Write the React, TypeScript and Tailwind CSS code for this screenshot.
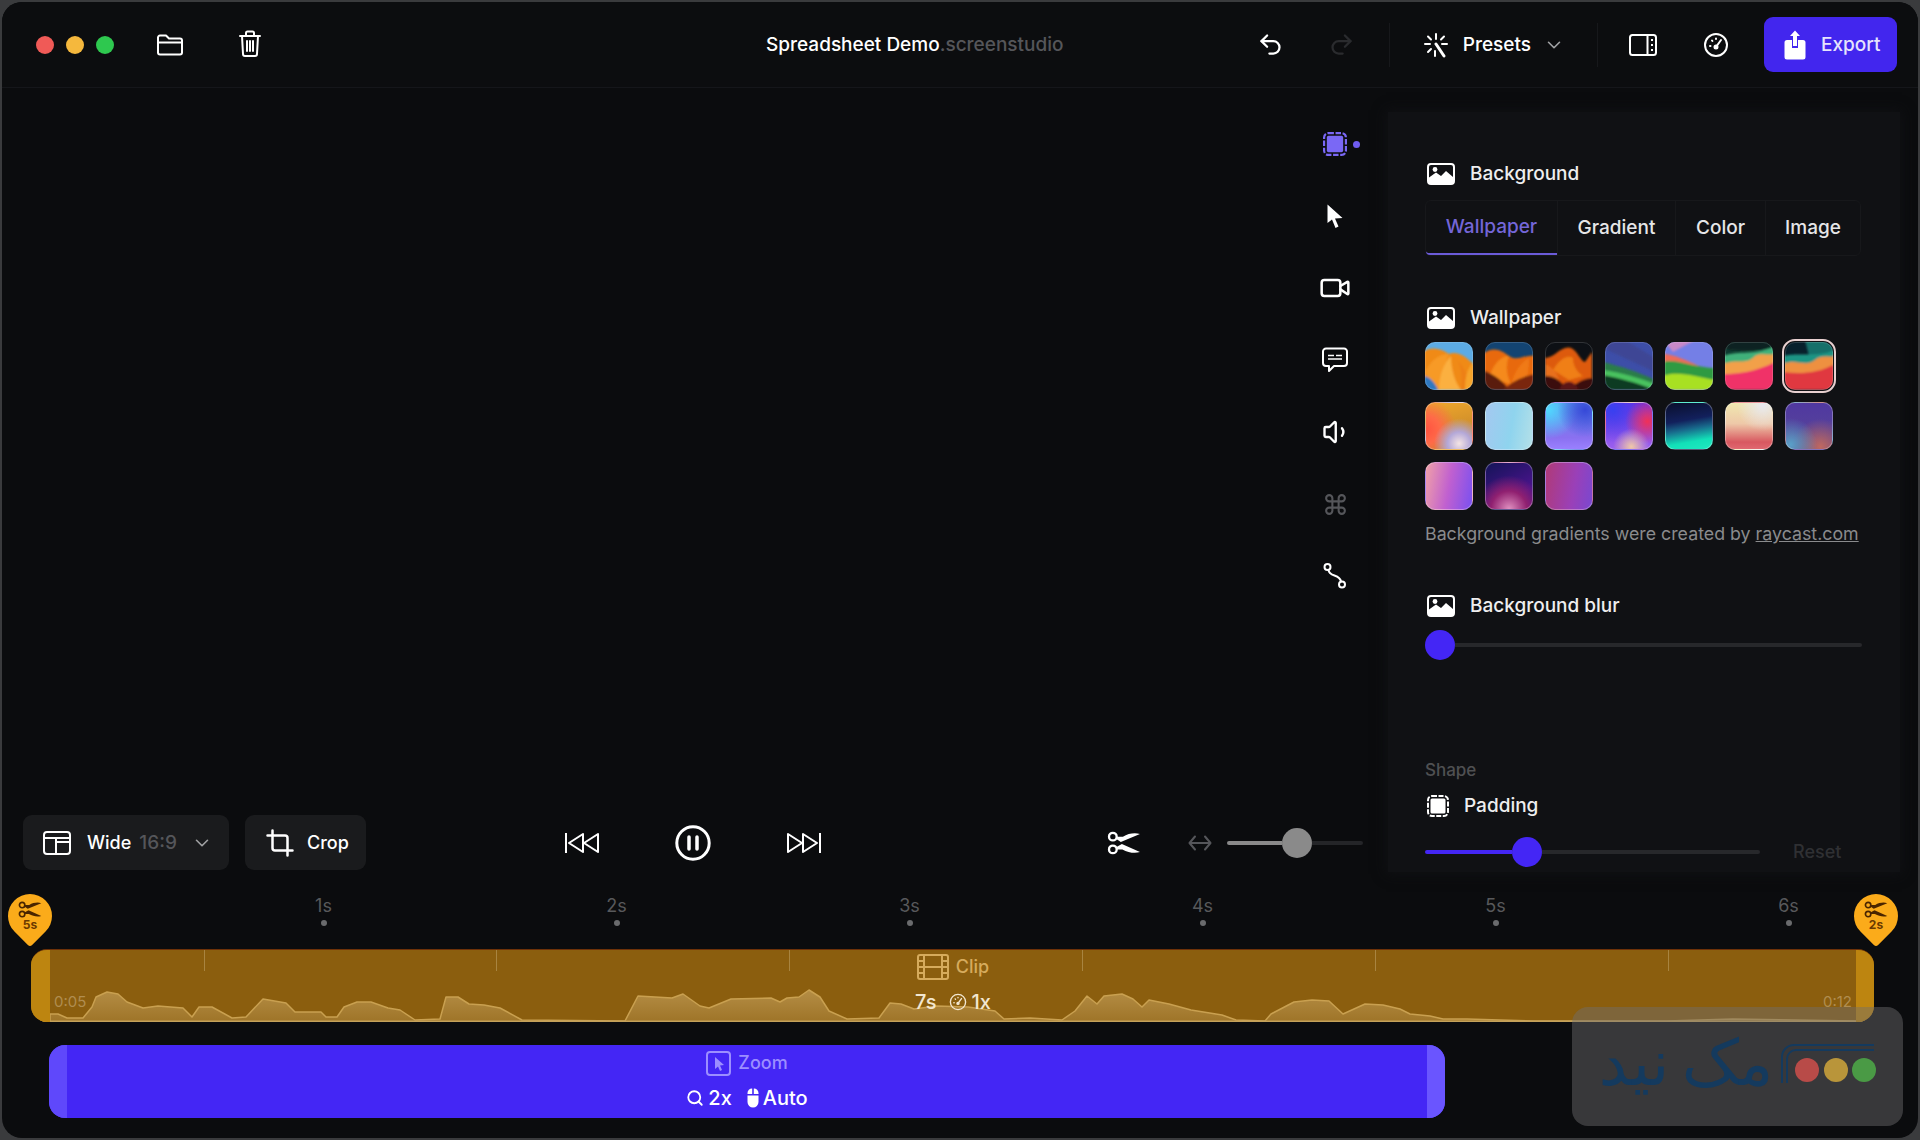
import { ChevronDown, Command, Crop, Redo2, Search, Undo2, Video, Volume1 } from "lucide-react"

// page x, height above the bottom of the clip
const wavePoints: Array<[number, number]> = [
  [50, 9], [58, 9], [67, 5], [83, 5], [92, 16], [96, 26], [107, 31], [118, 29], [127, 21], [143, 15], [158, 17], [183, 15], [192, 6], [199, 16], [212, 16], [232, 5], [246, 6], [263, 24], [286, 20], [295, 11], [321, 11], [326, 6], [337, 6], [344, 16], [357, 21], [371, 21], [388, 15], [400, 13], [415, 3], [440, 4], [446, 26], [458, 26], [469, 19], [484, 18], [500, 15], [522, 3], [625, 2], [638, 27], [672, 25], [683, 29], [700, 17], [709, 15], [731, 24], [771, 25], [780, 21], [787, 25], [799, 26], [809, 33], [820, 26], [829, 12], [847, 4], [879, 5], [890, 20], [901, 19], [914, 14], [937, 17], [968, 16], [995, 12], [1004, 4], [1030, 5], [1062, 3], [1075, 12], [1087, 27], [1097, 19], [1104, 27], [1122, 29], [1133, 24], [1142, 16], [1149, 23], [1169, 19], [1191, 13], [1222, 8], [1236, 3], [1265, 2], [1271, 9], [1294, 21], [1312, 23], [1329, 22], [1343, 9], [1365, 19], [1383, 18], [1400, 14], [1410, 9], [1430, 7], [1443, 4], [1467, 4], [1500, 3], [1533, 2], [1667, 2], [1733, 4], [1856, 2],
]
const waveLine = wavePoints.map(([x, h]) => `${x - 31},${73 - h}`).join(" L")

const rulerLabels = ["1s", "2s", "3s", "4s", "5s", "6s"]
const clipTicks = ["left-[173px]", "left-[465px]", "left-[758px]", "left-[1051px]", "left-[1344px]", "left-[1637px]"]

function ImageIcon() {
  return (
    <svg width="28" height="22" viewBox="0 0 28 22" fill="none">
      <rect x="1" y="1" width="26" height="20" rx="3" stroke="white" strokeWidth="2" />
      <path d="M2 20V14.5L9 9.5L14 13L19 8L26 14V20Z" fill="white" />
      <circle cx="8" cy="6.5" r="2.4" fill="white" />
    </svg>
  )
}

function PaddingIcon({ color, size }: { color: string; size: number }) {
  return (
    <svg width={size} height={size} viewBox="0 0 22 22" fill="none">
      <rect x="1" y="1" width="20" height="20" rx="4" stroke={color} strokeWidth="2" strokeDasharray="5 1.5" />
      <rect x="3.5" y="3.5" width="15" height="15" rx="1.5" fill={color} />
    </svg>
  )
}

function CutIcon({ width, height, color }: { width: number; height: number; color: string }) {
  return (
    <svg width={width} height={height} viewBox="0 0 32 22" fill="none">
      <circle cx="5.5" cy="5" r="3.6" stroke={color} strokeWidth="2.2" />
      <circle cx="5.5" cy="17" r="3.6" stroke={color} strokeWidth="2.2" />
      <path d="M8.5 7L13 10L31 2.5C26 1 20 2 15 5L9.5 5Z" fill={color} />
      <path d="M8.5 15L14 12L31 19.5C26 21 20 20 14.5 17L9.5 17Z" fill={color} />
    </svg>
  )
}

function HeaderRow({ label }: { label: string }) {
  return (
    <div className="flex items-center h-[24px] pl-[2px]">
      <ImageIcon />
      <span className="ml-[15px] text-[19px] leading-[24px] font-medium text-[#eeeeef]">{label}</span>
    </div>
  )
}

function PinMarker({ label, className }: { label: string; className: string }) {
  return (
    <div className={`absolute top-[6px] flex items-center justify-center size-[44px] rotate-45 rounded-[22px_22px_3px_22px] bg-[#fbab1a] ${className}`}>
      <div className="-rotate-45 flex flex-col items-center">
        <CutIcon width={24} height={17} color="#4a2500" />
        <span className="text-[12px] leading-[13px] font-bold text-[#6b3a00]">{label}</span>
      </div>
    </div>
  )
}

function SkipIcon({ forward }: { forward?: boolean }) {
  return (
    <svg width="38" height="22" viewBox="0 0 38 22" fill="none" stroke="white" strokeWidth="2" strokeLinejoin="round" className={forward ? "-scale-x-100" : ""}>
      <path d="M2 1V21" />
      <path d="M19 2L5 11L19 20Z" />
      <path d="M34 2L20 11L34 20Z" />
    </svg>
  )
}

function GaugeIcon({ size, color }: { size: number; color: string }) {
  return (
    <svg width={size} height={size} viewBox="0 0 26 26" fill="none" stroke={color} strokeWidth="2" strokeLinecap="round">
      <circle cx="13" cy="13" r="11" />
      <path d="M13 15L18 8" />
      <path d="M7 14H7.5M9 8.5L9.4 9M13 6.5V7" />
      <circle cx="13" cy="15" r="1.5" fill={color} />
    </svg>
  )
}

const wallpapers = [
  {
    bg: "#5cabe4",
    shapes: (
      <>
        <path d="M-2 48V10C6 4 16 6 24 12C30 9 40 12 50 24V48Z" fill="#f08a18" />
        <path d="M0 30C6 18 14 12 24 12C18 24 20 38 24 48H8Z" fill="#f79a26" />
        <path d="M14 48C14 32 20 20 26 14C26 28 30 40 36 48Z" fill="#fbb040" />
        <path d="M26 14C34 16 38 26 36 48H44C44 34 38 20 26 14Z" fill="#ee8014" />
        <path d="M40 48C40 36 42 28 48 20V48Z" fill="#f7a52c" />
        <path d="M-2 34C4 34 10 40 13 48H-2Z" fill="#2f78c0" />
      </>
    ),
  },
  {
    bg: "#134472",
    shapes: (
      <>
        <path d="M-2 48V12C8 4 16 8 24 14C32 20 40 12 50 14V48Z" fill="#e8690f" />
        <path d="M4 36C8 22 16 14 24 14C20 24 22 34 26 42Z" fill="#f58a1c" />
        <path d="M26 42C30 30 34 22 44 16C44 28 42 36 40 44Z" fill="#f07a14" />
        <path d="M-2 28C8 32 20 40 24 48H-2Z" fill="#5a1c0a" />
        <path d="M18 48C28 38 40 34 50 32V48Z" fill="#7a280c" />
      </>
    ),
  },
  {
    bg: "#0d1015",
    shapes: (
      <>
        <path d="M0 16C10 16 16 3 26 6C32 8 36 20 40 20L47 10V42H0Z" fill="#dd5a0c" />
        <path d="M8 28C14 18 22 12 28 16C28 24 32 30 38 34L24 38Z" fill="#f07f18" />
        <path d="M0 22C6 24 12 30 14 38L0 36Z" fill="#e8701a" />
        <path d="M0 34C10 34 18 40 22 48H0ZM26 48C30 40 40 36 48 36V48Z" fill="#3a0e0c" />
        <path d="M14 48C18 38 28 36 34 48Z" fill="#5c1416" />
      </>
    ),
  },
  {
    bg: "#3d4ea8",
    shapes: (
      <>
        <path d="M-2 6L50 30V16L20 -2H-2Z" fill="#3e4690" opacity="0.8" />
        <path d="M-2 20C14 24 34 30 50 38V48H-2Z" fill="#2b7d48" />
        <path d="M-2 28C14 30 34 36 50 42V48H-2Z" fill="#49c25e" />
        <path d="M-2 33C14 36 30 40 50 48H-2Z" fill="#103a20" />
      </>
    ),
  },
  {
    bg: "#747fe6",
    shapes: (
      <>
        <path d="M-2 -2H30L8 10Z" fill="#c888c8" />
        <path d="M-2 12C10 12 30 22 50 32V36H-2Z" fill="#ef6a58" />
        <path d="M-2 20C10 16 30 26 50 26V48H-2Z" fill="#2f9a42" />
        <path d="M-2 34C14 28 34 36 50 38V48H-2Z" fill="#a8e020" />
      </>
    ),
  },
  {
    bg: "#0f3a30",
    shapes: (
      <>
        <path d="M-2 -2H50V12C34 4 16 12 -2 6Z" fill="#0a2420" />
        <path d="M-2 14C14 8 30 14 50 4V48H-2Z" fill="#3fb07a" />
        <path d="M-2 22C14 16 20 24 30 14C36 10 44 14 50 12V48H-2Z" fill="#f2a048" />
        <path d="M-2 32C14 32 30 30 50 20V48H-2Z" fill="#f03068" />
      </>
    ),
  },
  {
    bg: "#08202c",
    shapes: (
      <>
        <path d="M20 -2H50V12L24 14Z" fill="#16706a" />
        <path d="M-2 14C14 10 30 16 50 8V48H-2Z" fill="#1f9484" />
        <path d="M-2 22C12 16 20 26 30 18C36 12 44 16 50 14V48H-2Z" fill="#ee9040" />
        <path d="M-2 30C14 32 32 32 50 22V48H-2Z" fill="#e03840" />
      </>
    ),
  },
]

const gradientSwatches = [
  "bg-[radial-gradient(circle_at_72%_88%,#f4e4e4_0%,#b4a8d8_22%,transparent_48%),radial-gradient(circle_at_0%_58%,#ff5340_0%,#ff6a48_26%,transparent_58%),linear-gradient(165deg,#f0a72c,#c98a2a_70%)]",
  "bg-[linear-gradient(100deg,#a4c8f0,#8fd4ee_55%,#b4e0e8)]",
  "bg-[radial-gradient(circle_at_85%_15%,#3648d8_0%,transparent_50%),radial-gradient(circle_at_5%_15%,#50d8ff_0%,transparent_50%),linear-gradient(180deg,#5a90e8,#8a70f0_75%,#9a80ff)]",
  "bg-[radial-gradient(circle_at_55%_95%,#f0c8a8_0%,transparent_36%),radial-gradient(circle_at_90%_40%,#f03058_0%,transparent_45%),radial-gradient(circle_at_15%_15%,#3840f0_0%,transparent_60%),linear-gradient(180deg,#7030e0,#9a60f0)]",
  "bg-[linear-gradient(170deg,#0a0f2c_0%,#12205c_38%,#186a8c_56%,#12e0b8_80%,#20e8c0_100%)]",
  "bg-[radial-gradient(circle_at_80%_5%,#e8e8f0_0%,transparent_45%),linear-gradient(180deg,#f0e8b0_0%,#eec8a8_45%,#d85860_85%,#e06870_100%)]",
  "bg-[radial-gradient(circle_at_10%_90%,#5aa0c8_0%,transparent_45%),radial-gradient(circle_at_75%_95%,#c06860_0%,transparent_50%),linear-gradient(180deg,#5038a0,#54409c_50%,#604888)]",
  "bg-[linear-gradient(100deg,#f0a0a8_0%,#c060d0_50%,#7a50f0_100%)]",
  "bg-[radial-gradient(circle_at_50%_100%,#e090c0_0%,#902070_35%,transparent_65%),linear-gradient(150deg,#141458,#4a148c_70%)]",
  "bg-[linear-gradient(100deg,#b03a78_0%,#9a40b8_60%,#7a48d0_100%)]",
]

export default function App() {
  return (
    <div className="w-[1920px] h-[1140px] overflow-hidden bg-[#3a3b3d] [font-family:Inter,sans-serif]">
      <div className="relative w-[1916px] h-[1136px] mx-[2px] mt-[2px] rounded-[20px] overflow-hidden bg-[#0b0c0e] flex flex-col">
        <svg width="0" height="0" className="absolute">
          <filter id="soft"><feGaussianBlur stdDeviation="0.8" /></filter>
          <linearGradient id="waveFill" x1="0" y1="0" x2="0" y2="1">
            <stop offset="0" stopColor="#ffe2a8" stopOpacity="0.36" />
            <stop offset="1" stopColor="#ffe2a8" stopOpacity="0.16" />
          </linearGradient>
        </svg>

        {/* Top bar */}
        <div className="flex items-center h-[86px] shrink-0 border-b border-[#15161a] bg-[#0c0d0f] text-white">
          <div className="ml-[34px] flex gap-[12px]">
            <span className="size-[18px] rounded-full bg-[#f05a57]" />
            <span className="size-[18px] rounded-full bg-[#f5b83d]" />
            <span className="size-[18px] rounded-full bg-[#2ec84f]" />
          </div>
          <svg width="28" height="22" viewBox="0 0 28 22" fill="none" stroke="white" strokeWidth="2" strokeLinejoin="round" className="ml-[42px]">
            <path d="M2 5V3.5A2 2 0 0 1 4 1.5H10L13 4.5H24A2 2 0 0 1 26 6.5V18.5A2 2 0 0 1 24 20.5H4A2 2 0 0 1 2 18.5Z" />
            <path d="M2 8.5H26" />
          </svg>
          <svg width="24" height="28" viewBox="0 0 24 28" fill="none" stroke="white" strokeWidth="2" strokeLinecap="round" strokeLinejoin="round" className="ml-[54px] -mt-[2px]">
            <path d="M2 6H22M8 6V3A1.5 1.5 0 0 1 9.5 1.5H14.5A1.5 1.5 0 0 1 16 3V6" />
            <path d="M4 6L5 24A2 2 0 0 0 7 26H17A2 2 0 0 0 19 24L20 6" />
            <path d="M9 11V21M12 11V21M15 11V21" />
          </svg>
          <div className="ml-[504px] text-[19px] font-medium leading-[24px] whitespace-nowrap">
            <span className="text-white">Spreadsheet Demo</span>
            <span className="text-[#55565a]">.screenstudio</span>
          </div>
          <div className="ml-auto flex items-center mr-[21px]">
            <Undo2 size={27} strokeWidth={2} />
            <Redo2 size={27} strokeWidth={2} className="ml-[44px] text-[#2a2b2e]" />
            <span className="ml-[34px] w-px h-[44px] bg-[#17181b]" />
            <svg width="26" height="26" viewBox="0 0 26 26" fill="none" stroke="white" strokeWidth="2" strokeLinecap="round" className="ml-[33px]">
              <path d="M13 2V7M2 12H7M19 12H24M5 4.5L8 7.5M21 4.5L18 7.5M5 20L8 17M12 24V19" />
              <path d="M13 12L21 24" strokeWidth="3" />
            </svg>
            <span className="ml-[14px] text-[19px] font-medium leading-[24px]">Presets</span>
            <ChevronDown size={22} strokeWidth={1.75} className="ml-[12px] text-[#a0a1a3]" />
            <span className="ml-[32px] w-px h-[44px] bg-[#17181b]" />
            <svg width="28" height="22" viewBox="0 0 28 22" fill="none" stroke="white" strokeWidth="2" className="ml-[31px]">
              <rect x="1" y="1" width="26" height="20" rx="2.5" />
              <path d="M18.5 1V21" />
              <path d="M23 5V7M23 10V12M23 15V17" />
            </svg>
            <span className="ml-[46px]"><GaugeIcon size={26} color="white" /></span>
            <button className="ml-[35px] flex items-center w-[133px] h-[55px] pl-[20px] rounded-[9px] bg-[#4226ee] text-white">
              <svg width="22" height="30" viewBox="0 0 22 30" fill="white">
                <path d="M8 10H3A2.5 2.5 0 0 0 0.5 12.5V27A2.5 2.5 0 0 0 3 29.5H19A2.5 2.5 0 0 0 21.5 27V12.5A2.5 2.5 0 0 0 19 10H14V18H8Z" />
                <path d="M11 0.5L16 6H13V16H9V6H6Z" />
              </svg>
              <span className="ml-[15px] text-[19px] font-medium leading-[24px] text-[#e6e3fd]">Export</span>
            </button>
          </div>
        </div>

        {/* Stage, tool rail and settings */}
        <div className="flex h-[800px] shrink-0">
          <div className="w-[1386px] flex flex-col">
            <div className="flex-1 flex justify-end">
              <div className="w-[106px] pt-[20px] flex flex-col items-center text-white">
                <div className="relative h-[72px] flex items-center justify-center">
                  <PaddingIcon color="#7a68f5" size={24} />
                  <span className="absolute left-[30px] size-[7px] rounded-full bg-[#6f5cf0]" />
                </div>
                <div className="h-[72px] flex items-center justify-center">
                  <svg width="16" height="25" viewBox="0 0 16 25" fill="white">
                    <path d="M0.5 0.5V19L5 15.5L8.5 24L11.5 22.5L8 14.5L15.5 14Z" />
                  </svg>
                </div>
                <div className="h-[72px] flex items-center justify-center">
                  <Video size={32} strokeWidth={1.9} />
                </div>
                <div className="h-[72px] flex items-center justify-center">
                  <svg width="26" height="26" viewBox="0 0 26 26" fill="none" stroke="white" strokeWidth="2" strokeLinejoin="round">
                    <path d="M4 1.5H22A3 3 0 0 1 25 4.5V16A3 3 0 0 1 22 19H12L7 24V19H4A3 3 0 0 1 1 16V4.5A3 3 0 0 1 4 1.5Z" />
                    <path d="M6 8.5H12M14 8.5H20M6 12H20" strokeWidth="1.6" />
                  </svg>
                </div>
                <div className="h-[72px] flex items-center justify-center">
                  <Volume1 size={30} strokeWidth={1.9} className="ml-[3px]" />
                </div>
                <div className="h-[72px] flex items-center justify-center">
                  <Command size={25} strokeWidth={2} className="text-[#55565a]" />
                </div>
                <div className="h-[72px] flex items-center justify-center">
                  <svg width="24" height="26" viewBox="0 0 24 26" fill="none" stroke="white" strokeWidth="2">
                    <circle cx="4.5" cy="4" r="3" />
                    <circle cx="19" cy="21.5" r="3" />
                    <path d="M5.5 7C6 14 17 11 18 18.5" strokeLinecap="round" />
                  </svg>
                </div>
              </div>
            </div>

            {/* Player controls */}
            <div className="flex items-center h-[55px] mb-[18px] text-white">
              <button className="ml-[21px] flex items-center w-[206px] h-[55px] pl-[20px] rounded-[9px] bg-[#1a1b1d]">
                <svg width="28" height="24" viewBox="0 0 28 24" fill="none" stroke="white" strokeWidth="2">
                  <rect x="1" y="1" width="26" height="22" rx="3" />
                  <path d="M1 7H27M13 7V23M13 11H27" />
                </svg>
                <span className="ml-[16px] text-[18px] font-medium leading-[24px]">Wide</span>
                <span className="ml-[8px] text-[19px] font-medium leading-[24px] text-[#55565a]">16:9</span>
                <ChevronDown size={22} strokeWidth={1.75} className="ml-[14px] text-[#a0a1a3]" />
              </button>
              <button className="ml-[16px] flex items-center w-[121px] h-[55px] pl-[20px] rounded-[9px] bg-[#1a1b1d]">
                <Crop size={30} strokeWidth={2} />
                <span className="ml-[12px] text-[18px] font-medium leading-[24px]">Crop</span>
              </button>
              <div className="ml-[198px]"><SkipIcon /></div>
              <svg width="36" height="36" viewBox="0 0 36 36" fill="none" stroke="white" className="ml-[73px]">
                <circle cx="18" cy="18" r="16.2" strokeWidth="3" />
                <path d="M14 12V24M22 12V24" strokeWidth="3.5" strokeLinecap="round" />
              </svg>
              <div className="ml-[73px]"><SkipIcon forward /></div>
              <span className="ml-[285px]"><CutIcon width={34} height={24} color="white" /></span>
              <svg width="24" height="16" viewBox="0 0 24 16" fill="none" stroke="#55565a" strokeWidth="2" strokeLinecap="round" strokeLinejoin="round" className="ml-[47px]">
                <path d="M7 1.5L1.5 8L7 14.5M17 1.5L22.5 8L17 14.5M2 8H22" />
              </svg>
              <span className="ml-[15px] w-[55px] h-[4px] rounded-l-full bg-[#8a8a8a]" />
              <span className="size-[30px] rounded-full bg-[#8a8a8a]" />
              <span className="w-[51px] h-[4px] rounded-r-full bg-[#242528]" />
            </div>
          </div>

          {/* Settings panel */}
          <div className="w-[512px] h-[760px] mt-[24px] pl-[37px] bg-[#101114] shadow-[0_0_12px_2px_#101114] flex flex-col">
            <div className="mt-[50px]"><HeaderRow label="Background" /></div>
            <div className="mt-[14px] flex w-[436px] h-[56px] text-[19px] font-medium rounded-[6px] border border-[#17181b]">
              <div className="w-[131px] flex items-center justify-center border-b-2 border-[#6b5bd8] text-[#7466d8] rounded-bl-[4px]">Wallpaper</div>
              <div className="w-[118px] flex items-center justify-center border-l border-[#17181b] text-[#e6e6e8]">Gradient</div>
              <div className="w-[90px] flex items-center justify-center border-l border-[#17181b] text-[#e6e6e8]">Color</div>
              <div className="flex-1 flex items-center justify-center border-l border-[#17181b] text-[#e6e6e8]">Image</div>
            </div>

            <div className="mt-[50px]"><HeaderRow label="Wallpaper" /></div>
            <div className="mt-[12px] grid grid-cols-[repeat(7,48px)] gap-[12px]">
              {wallpapers.map((w, i) => (
                <div key={i} className={`relative size-[48px] rounded-[10px] ${i === 6 ? "outline-2 outline-offset-1 outline-[#e8d0d0]" : ""}`}>
                  <svg width="48" height="48" viewBox="0 0 48 48" className="rounded-[10px]">
                    <rect width="48" height="48" fill={w.bg} />
                    <g filter="url(#soft)">{w.shapes}</g>
                  </svg>
                  <span className="absolute inset-0 rounded-[10px] border border-white/15" />
                </div>
              ))}
              {gradientSwatches.map((cls, i) => (
                <div key={i} className={`size-[48px] rounded-[10px] border border-white/30 ${cls}`} />
              ))}
            </div>
            <p className="mt-[12px] text-[17.8px] leading-[24px] text-[#8a8b8d] whitespace-nowrap">
              Background gradients were created by <span className="underline">raycast.com</span>
            </p>

            <div className="mt-[48px]"><HeaderRow label="Background blur" /></div>
            <div className="mt-[12px] flex items-center w-[437px]">
              <span className="size-[30px] rounded-full bg-[#4426f5]" />
              <span className="flex-1 h-[4px] rounded-r-full bg-[#27282b]" />
            </div>

            <p className="mt-[98px] text-[17px] leading-[24px] font-medium text-[#4f5052]">Shape</p>
            <div className="mt-[12px] flex items-center h-[24px] pl-[2px]">
              <PaddingIcon color="white" size={22} />
              <span className="ml-[15px] text-[19px] leading-[24px] font-medium text-[#eeeeef]">Padding</span>
            </div>
            <div className="mt-[19px] flex items-center">
              <span className="w-[87px] h-[4px] rounded-l-full bg-[#4426f5]" />
              <span className="size-[30px] rounded-full bg-[#4426f5]" />
              <span className="w-[218px] h-[4px] rounded-r-full bg-[#27282b]" />
              <span className="ml-[33px] text-[18px] font-medium leading-[24px] text-[#2f3033]">Reset</span>
            </div>
          </div>
        </div>

        {/* Timeline */}
        <div className="relative flex-1">
          <div className="flex h-[61px] pl-[175px] pt-[6px]">
            {rulerLabels.map((label) => (
              <div key={label} className="w-[293px] shrink-0 flex flex-col items-center">
                <span className="text-[18px] leading-[24px] text-[#58595b]">{label}</span>
                <span className="mt-[2px] size-[6px] rounded-full bg-[#6a6b6d]" />
              </div>
            ))}
          </div>
          <PinMarker label="5s" className="left-[6px]" />
          <PinMarker label="2s" className="left-[1852px]" />

          {/* Clip track */}
          <div className="relative ml-[29px] w-[1843px] h-[73px] flex overflow-hidden rounded-[16px] bg-[#8b5e0e] border-t border-[#6e3208]">
            <svg width="1843" height="73" viewBox="0 0 1843 73" className="absolute left-0 top-0">
              <path d={`M${waveLine} V73 H19 Z`} fill="url(#waveFill)" stroke="#c9a050" strokeWidth="1.5" strokeLinejoin="round" />
              <path d="M0 71.5H1843" stroke="#c5a25a" strokeWidth="2" />
            </svg>
            {clipTicks.map((left) => (
              <span key={left} className={`absolute top-0 w-px h-[21px] bg-[#a88440] ${left}`} />
            ))}
            <span className="relative w-[19px] bg-[#bd8510]" />
            <div className="relative flex-1 flex flex-col items-center pt-[5px]">
              <div className="flex items-center h-[24px] text-[#d6ab5c]">
                <svg width="32" height="26" viewBox="0 0 32 26" fill="none" stroke="#d6ab5c" strokeWidth="2">
                  <rect x="1" y="1" width="30" height="24" rx="2" />
                  <path d="M7 1V25M25 1V25M7 13H25M1 7H7M1 13H7M1 19H7M25 7H31M25 13H31M25 19H31" />
                </svg>
                <span className="ml-[7px] text-[18px] font-medium leading-[24px]">Clip</span>
              </div>
              <div className="mt-[11px] flex items-center h-[24px] text-[#f2e6d0] text-[20px] font-medium leading-[24px]">
                <span>7s</span>
                <span className="ml-[13px]"><GaugeIcon size={18} color="#f2e6d0" /></span>
                <span className="ml-[4px]">1x</span>
              </div>
              <span className="absolute left-[4px] top-[42px] text-[15px] leading-[20px] text-[#b08d50]">0:05</span>
              <span className="absolute right-[4px] top-[42px] text-[15px] leading-[20px] text-[#b08d50]">0:12</span>
            </div>
            <span className="relative w-[18px] bg-[#bd8510]" />
          </div>

          {/* Zoom track */}
          <div className="ml-[47px] mt-[23px] w-[1396px] h-[73px] flex overflow-hidden rounded-[16px] bg-[#4426f5]">
            <span className="w-[18px] bg-[#5f48fb]" />
            <div className="flex-1 flex flex-col items-center pt-[6px]">
              <div className="flex items-center h-[24px] text-[#9c8eff]">
                <svg width="25" height="25" viewBox="0 0 25 25" fill="none" className="text-[#9c8eff]">
                  <rect x="1" y="1" width="23" height="23" rx="3" stroke="currentColor" strokeWidth="2" />
                  <path d="M9 6V18L12 15.5L14 20L16 19L14 14.5L18 14Z" fill="currentColor" />
                </svg>
                <span className="ml-[7px] text-[18px] font-medium leading-[24px]">Zoom</span>
              </div>
              <div className="mt-[11px] flex items-center h-[24px] text-white text-[20px] font-medium leading-[24px]">
                <Search size={18} strokeWidth={2.4} />
                <span className="ml-[4px]">2x</span>
                <svg width="12" height="20" viewBox="0 0 12 20" fill="white" className="ml-[15px]">
                  <path d="M5.2 0.5V6H0.5V5A4.5 4.5 0 0 1 5.2 0.5ZM6.8 0.5A4.5 4.5 0 0 1 11.5 5V6H6.8ZM0.5 7.5H11.5V14A5.5 5.5 0 0 1 0.5 14Z" />
                </svg>
                <span className="ml-[4px]">Auto</span>
              </div>
            </div>
            <span className="w-[18px] bg-[#6a55ff]" />
          </div>
        </div>

        {/* Watermark */}
        <div className="absolute left-[1570px] top-[1005px] w-[331px] h-[119px] rounded-[16px] bg-[#6e6f70]/45">
          <span dir="rtl" className="absolute left-[26px] top-[20px] w-[176px] text-center text-[64px] leading-[72px] [word-spacing:-8px] whitespace-nowrap text-[#143a5e] [font-family:'DejaVu_Sans',sans-serif]">مک نید</span>
          <svg width="100" height="50" viewBox="0 0 100 50" fill="none" stroke="#143a5e" strokeWidth="2" className="absolute left-[208px] top-[34px]">
            <path d="M2 42V16A12 12 0 0 1 14 4H94" />
            <path d="M7 42V18A9 9 0 0 1 16 9H94" />
          </svg>
          <span className="absolute left-[223px] top-[51px] size-[24px] rounded-full bg-[#b84b48]" />
          <span className="absolute left-[252px] top-[51px] size-[24px] rounded-full bg-[#b9953a]" />
          <span className="absolute left-[280px] top-[51px] size-[24px] rounded-full bg-[#4a9a45]" />
        </div>
      </div>
    </div>
  )
}
